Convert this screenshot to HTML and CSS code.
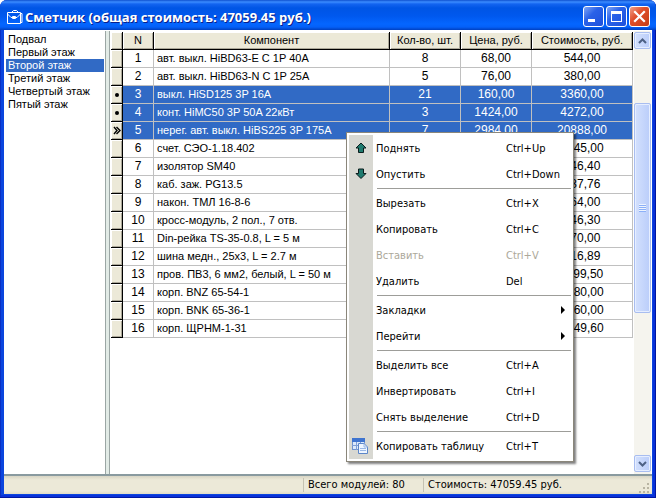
FILE: index.html
```html
<!DOCTYPE html>
<html lang="ru">
<head>
    <meta charset="UTF-8">
    <meta name="viewport" content="width=device-width, initial-scale=1.0">
    <title>Сметчик</title>
    <link rel="stylesheet" href="styles.css">
</head>
<body>
    <div class="window">
        <header class="titlebar">
            <svg class="app-icon" width="16" height="16" viewBox="0 0 16 16" fill="none" stroke="#fff">
                <path d="M4.500 3.500L6.500 1.500H9.500L11.500 3.500"/>
                <path d="M0.500 3.500H13.500V14.500H0.500ZM13.500 4.500H15V13.500H13.500"/>
                <path d="M0.500 5L4 8.500H10L13.500 5M5.500 7.500H8.500V9.500H5.500Z"/>
            </svg>
            <h1>Сметчик (общая стоимость: 47059.45 руб.)</h1>
            <div class="window-buttons">
                <button class="win-btn" aria-label="Свернуть">
                    <svg width="19" height="19" viewBox="0 0 19 19"><path d="M4 12H11V15H4Z" fill="#fff"/></svg>
                </button>
                <button class="win-btn" aria-label="Развернуть">
                    <svg width="19" height="19" viewBox="0 0 19 19"><path d="M4 4H15V15H4ZM5 7V14H14V7Z" fill="#fff" fill-rule="evenodd"/></svg>
                </button>
                <button class="win-btn close" aria-label="Закрыть">
                    <svg width="19" height="19" viewBox="0 0 19 19"><path d="M5 5L14 14M14 5L5 14" stroke="#fff" stroke-width="2.200" stroke-linecap="square"/></svg>
                </button>
            </div>
        </header>

        <main class="content">
            <nav class="sections">
                <button>Подвал</button>
                <button>Первый этаж</button>
                <button class="active">Второй этаж</button>
                <button>Третий этаж</button>
                <button>Четвертый этаж</button>
                <button>Пятый этаж</button>
            </nav>
            <div class="splitter"></div>
            <div class="table-area">
                <table class="grid">
                    <colgroup>
                        <col class="col-mark"><col class="col-num"><col><col class="col-qty"><col class="col-price"><col class="col-total">
                    </colgroup>
                    <thead>
                        <tr><th></th><th>N</th><th>Компонент</th><th>Кол-во, шт.</th><th>Цена, руб.</th><th>Стоимость, руб.</th></tr>
                    </thead>
                    <tbody>
                        <tr><th></th><td>1</td><td>авт. выкл. HiBD63-E C 1P 40A</td><td>8</td><td>68,00</td><td>544,00</td></tr>
                        <tr><th></th><td>2</td><td>авт. выкл. HiBD63-N C 1P 25A</td><td>5</td><td>76,00</td><td>380,00</td></tr>
                        <tr class="selected"><th><i class="dot"></i></th><td>3</td><td>выкл. HiSD125 3P 16A</td><td>21</td><td>160,00</td><td>3360,00</td></tr>
                        <tr class="selected"><th><i class="dot"></i></th><td>4</td><td>конт. HiMC50 3P 50A 22кВт</td><td>3</td><td>1424,00</td><td>4272,00</td></tr>
                        <tr class="selected">
                            <th><svg width="8" height="9" viewBox="0 0 8 9" fill="none" stroke="#000" stroke-width="1.400"><path d="M1 1L4 4.500L1 8M3.500 1L7 4.500L3.500 8"/></svg></th>
                            <td>5</td><td>нерег. авт. выкл. HiBS225 3P 175A</td><td>7</td><td>2984,00</td><td>20888,00</td>
                        </tr>
                        <tr><th></th><td>6</td><td>счет. СЭО-1.18.402</td><td></td><td></td><td>1045,00</td></tr>
                        <tr><th></th><td>7</td><td>изолятор SM40</td><td></td><td></td><td>146,40</td></tr>
                        <tr><th></th><td>8</td><td>каб. заж. PG13.5</td><td></td><td></td><td>137,76</td></tr>
                        <tr><th></th><td>9</td><td>након. ТМЛ 16-8-6</td><td></td><td></td><td>164,00</td></tr>
                        <tr><th></th><td>10</td><td>кросс-модуль, 2 пол., 7 отв.</td><td></td><td></td><td>246,30</td></tr>
                        <tr><th></th><td>11</td><td>Din-рейка TS-35-0.8, L = 5 м</td><td></td><td></td><td>170,00</td></tr>
                        <tr><th></th><td>12</td><td>шина медн., 25x3, L = 2.7 м</td><td></td><td></td><td>416,89</td></tr>
                        <tr><th></th><td>13</td><td>пров. ПВ3, 6 мм2, белый, L = 50 м</td><td></td><td></td><td>1199,50</td></tr>
                        <tr><th></th><td>14</td><td>корп. BNZ 65-54-1</td><td></td><td></td><td>3680,00</td></tr>
                        <tr><th></th><td>15</td><td>корп. BNK 65-36-1</td><td></td><td></td><td>2160,00</td></tr>
                        <tr><th></th><td>16</td><td>корп. ЩРНМ-1-31</td><td></td><td></td><td>4549,60</td></tr>
                    </tbody>
                </table>
            </div>
            <div class="scrollbar">
                <button class="scroll-btn" aria-label="Вверх">
                    <svg width="9" height="6" viewBox="0 0 9 6"><path d="M1 5L4.500 1.500L8 5" fill="none" stroke="#4d6185" stroke-width="2"/></svg>
                </button>
                <div class="track"><div class="thumb"><span class="grip"></span></div></div>
                <button class="scroll-btn" aria-label="Вниз">
                    <svg width="9" height="6" viewBox="0 0 9 6"><path d="M1 1L4.500 4.500L8 1" fill="none" stroke="#4d6185" stroke-width="2"/></svg>
                </button>
            </div>
        </main>

        <footer class="statusbar">
            <span></span>
            <span>Всего модулей: 80</span>
            <span>Стоимость: 47059.45 руб.</span>
            <svg class="resize" width="11" height="11" viewBox="0 0 11 11" fill="#b8b4a2">
                <path d="M8 0h2v2h-2zM4 4h2v2h-2zM8 4h2v2h-2zM0 8h2v2h-2zM4 8h2v2h-2zM8 8h2v2h-2z"/>
            </svg>
        </footer>
    </div>

    <div class="context-menu" role="menu">
        <button role="menuitem">
            <svg width="12" height="12" viewBox="0 0 12 12"><path d="M6 1L11 6H8.500V10.500H3.500V6H1Z" fill="#1f7a6e" stroke="#0a1c1c"/></svg>
            <span>Поднять</span><kbd>Ctrl+Up</kbd>
        </button>
        <button role="menuitem">
            <svg width="12" height="12" viewBox="0 0 12 12"><path d="M6 10.500L11 5.500H8.500V1H3.500V5.500H1Z" fill="#1f7a6e" stroke="#0a1c1c"/></svg>
            <span>Опустить</span><kbd>Ctrl+Down</kbd>
        </button>
        <hr>
        <button role="menuitem"><i></i><span>Вырезать</span><kbd>Ctrl+X</kbd></button>
        <button role="menuitem"><i></i><span>Копировать</span><kbd>Ctrl+C</kbd></button>
        <button role="menuitem" disabled><i></i><span>Вставить</span><kbd>Ctrl+V</kbd></button>
        <button role="menuitem"><i></i><span>Удалить</span><kbd>Del</kbd></button>
        <hr>
        <button role="menuitem" class="submenu"><i></i><span>Закладки</span></button>
        <button role="menuitem" class="submenu"><i></i><span>Перейти</span></button>
        <hr>
        <button role="menuitem"><i></i><span>Выделить все</span><kbd>Ctrl+A</kbd></button>
        <button role="menuitem"><i></i><span>Инвертировать</span><kbd>Ctrl+I</kbd></button>
        <button role="menuitem"><i></i><span>Снять выделение</span><kbd>Ctrl+D</kbd></button>
        <hr>
        <button role="menuitem">
            <svg class="table-icon" width="16" height="16" viewBox="0 0 16 16">
                <rect x="0.500" y="0.500" width="12" height="11" fill="#dce9fb" stroke="#6f93cf"/>
                <path d="M0 0H13V4H0Z" fill="#3f74cf"/>
                <path d="M4.500 4V12M8.500 4V12M0 7.500H13" stroke="#7f9fd6"/>
                <path d="M6.500 5.500H12L15.500 9V15.500H6.500Z" fill="#eef5ff" stroke="#5c86c8"/>
                <path d="M12 5.500V9H15.500M8 10.500H14M8 12.500H14" stroke="#9ab8e6" fill="none"/>
            </svg>
            <span>Копировать таблицу</span><kbd>Ctrl+T</kbd>
        </button>
    </div>
</body>
</html>
```
FILE: styles.css
```css
* {
    margin: 0;
    padding: 0;
    box-sizing: border-box;
}

body {
    height: 100vh;
    overflow: hidden;
    background: #fff;
    font-family: "Liberation Sans", Arial, sans-serif;
    font-size: 11px;
    color: #000;
}

button {
    border: none;
    background: none;
    font: inherit;
    color: inherit;
    text-align: left;
}

svg {
    display: block;
}

/* Window frame */
.window {
    display: flex;
    flex-direction: column;
    height: 100vh;
    padding: 0 4px 4px;
    border-radius: 7px 7px 0 0;
    background: #0b45de;
    box-shadow: inset -1px -1px 0 #0016a0, inset 1px 0 0 #0a2fc4, inset -3px -3px 0 #0831d9;
}

.titlebar {
    display: flex;
    align-items: center;
    gap: 2px;
    height: 30px;
    margin: 0 -4px;
    padding: 3px 6px 0 7px;
    border-radius: 7px 7px 0 0;
    background: linear-gradient(#0f51cf 0, #3b8cff 2px, #1364f0 4px, #0055e5 8px, #0058ee 16px, #0466ff 24px, #0460f8 27px, #0040c0 30px);
}

.titlebar h1 {
    flex: 1;
    font-family: "Open Sans", "Trebuchet MS", sans-serif;
    font-size: 13px;
    font-weight: bold;
    color: #fff;
    text-shadow: 1px 1px 0 #0a1f8a;
    white-space: nowrap;
}

.window-buttons {
    display: flex;
    gap: 2px;
}

.win-btn {
    width: 21px;
    height: 21px;
    border: 1px solid #fff;
    border-radius: 3px;
    background: linear-gradient(135deg, #7fa5f5, #2a62e8 40%, #1d50dc);
}

.win-btn.close {
    background: linear-gradient(135deg, #f0a088, #e0502c 40%, #c63c14);
}

/* Main area */
.content {
    flex: 1;
    display: flex;
    min-height: 0;
    padding: 1px 1px 0;
    background: #fff;
    border-bottom: 2px solid #899a9f;
}

.sections {
    width: 100px;
    padding: 2px 1px;
}

.sections button {
    display: block;
    width: 100%;
    height: 13px;
    padding-left: 2px;
    line-height: 13px;
    white-space: nowrap;
}

.sections .active {
    background: #316ac5;
    color: #fff;
}

.splitter {
    width: 5px;
    border: solid #9ba6a4;
    border-width: 0 1px;
    background: #e2ebe6;
}

.table-area {
    flex: 1;
    min-width: 0;
    padding: 1px 1px 0;
}

/* Component table */
.grid {
    width: 100%;
    table-layout: fixed;
    border-collapse: separate;
    border-spacing: 0;
}

.col-mark {
    width: 12px;
}

.col-num {
    width: 31px;
}

.col-qty,
.col-price {
    width: 71px;
}

.col-total {
    width: 101px;
}

.grid th,
.grid td {
    height: 18px;
    border: solid #c0c0c0;
    border-width: 0 1px 1px 0;
    line-height: 17px;
    font-weight: normal;
    text-align: center;
    white-space: nowrap;
    overflow: hidden;
}

.grid td {
    font-size: 12px;
}

.grid th {
    border-color: #000;
    background: #ece9d8;
    box-shadow: inset 1px 1px 0 #fff, inset -1px -1px 0 #aca899;
}

.grid tbody th svg {
    margin: 0 auto;
}

.grid td:nth-child(3) {
    padding-left: 3px;
    font-size: 11px;
    text-align: left;
}

.grid .selected td {
    background: #316ac5;
    color: #fff;
}

.dot {
    display: block;
    width: 4px;
    height: 4px;
    margin: 0 auto;
    border-radius: 50%;
    background: #000;
}

/* Scrollbar */
.scrollbar {
    display: flex;
    flex-direction: column;
    width: 17px;
    padding: 1px 0 2px;
    background: #f5f4ee;
}

.scroll-btn,
.thumb {
    display: flex;
    align-items: center;
    justify-content: center;
    border: 1px solid #a8bdf0;
    border-radius: 2px;
    background: linear-gradient(90deg, #d3e0fd, #bacdfa);
    box-shadow: inset 0 0 0 1px #e6eeff;
}

.scroll-btn {
    height: 17px;
}

.track {
    flex: 1;
    display: grid;
    grid-template-rows: 13fr 50fr 34fr;
}

.thumb {
    grid-row: 2;
}

.grip {
    width: 7px;
    height: 8px;
    background: repeating-linear-gradient(#eef4fe 0 1px, #8cb0f8 1px 2px);
}

/* Status bar */
.statusbar {
    display: flex;
    align-items: center;
    height: 18px;
    background: linear-gradient(#d8d5c4, #ece9d8 4px, #ece9d8 15px, #e0dcc8);
    font-family: "DejaVu Sans Condensed", "DejaVu Sans", sans-serif;
    font-size: 11px;
}

.statusbar span {
    padding-left: 4px;
    border-left: 1px solid #c5c2b2;
    line-height: 14px;
    white-space: nowrap;
}

.statusbar span:nth-child(1) {
    flex: 1;
    border: none;
}

.statusbar span:nth-child(2) {
    width: 120px;
}

.statusbar span:nth-child(3) {
    width: 216px;
}

.resize {
    align-self: flex-end;
    margin-right: 2px;
}

/* Popup menu over the table */
.context-menu {
    position: absolute;
    top: 132px;
    left: 346px;
    width: 228px;
    padding: 2px;
    border: 1px solid #8a867a;
    background: linear-gradient(90deg, #fff 2px, #d8d8d2 2px 26px, #fff 26px);
    box-shadow: inset 0 0 0 2px #fff, 2px 2px 2px rgba(0, 0, 0, 0.5);
    font-family: "DejaVu Sans Condensed", "DejaVu Sans", sans-serif;
    font-size: 11px;
}

.context-menu button {
    display: grid;
    grid-template-columns: 27px 130px 1fr;
    align-items: center;
    width: 100%;
    height: 26px;
    white-space: nowrap;
}

.context-menu button svg {
    margin-left: 6px;
}

.context-menu .table-icon {
    margin-left: 3px;
}

.context-menu kbd {
    font: inherit;
}

.context-menu button:disabled {
    color: #aca899;
}

.context-menu hr {
    height: 3px;
    margin: 0 0 0 28px;
    border: solid transparent;
    border-width: 1px 0;
    background: #9d9d99 content-box;
    background-clip: padding-box;
}

.submenu::after {
    content: "";
    justify-self: end;
    margin-right: 6px;
    border: 4px solid transparent;
    border-left-color: #000;
    border-right: none;
}
```
